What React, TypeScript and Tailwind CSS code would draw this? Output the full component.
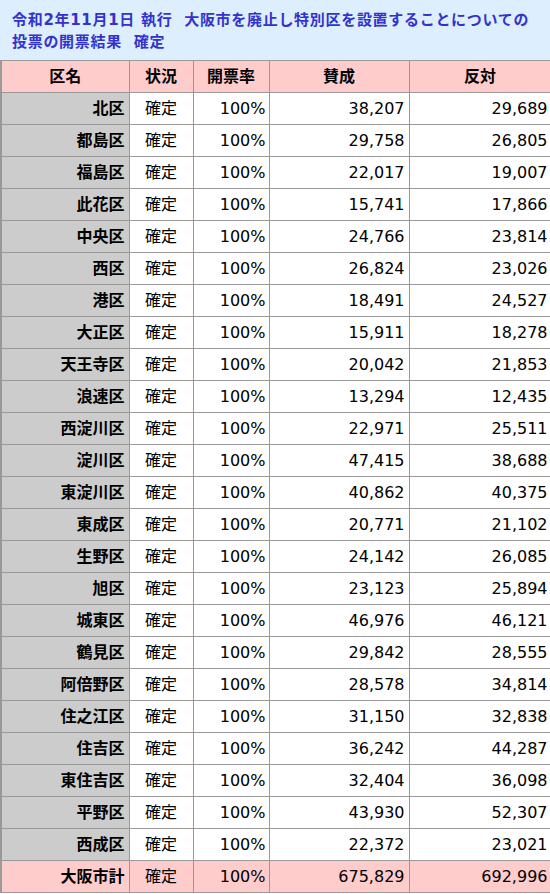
const rows: [string, string, string][] = [
  ["北区", "38,207", "29,689"],
  ["都島区", "29,758", "26,805"],
  ["福島区", "22,017", "19,007"],
  ["此花区", "15,741", "17,866"],
  ["中央区", "24,766", "23,814"],
  ["西区", "26,824", "23,026"],
  ["港区", "18,491", "24,527"],
  ["大正区", "15,911", "18,278"],
  ["天王寺区", "20,042", "21,853"],
  ["浪速区", "13,294", "12,435"],
  ["西淀川区", "22,971", "25,511"],
  ["淀川区", "47,415", "38,688"],
  ["東淀川区", "40,862", "40,375"],
  ["東成区", "20,771", "21,102"],
  ["生野区", "24,142", "26,085"],
  ["旭区", "23,123", "25,894"],
  ["城東区", "46,976", "46,121"],
  ["鶴見区", "29,842", "28,555"],
  ["阿倍野区", "28,578", "34,814"],
  ["住之江区", "31,150", "32,838"],
  ["住吉区", "36,242", "44,287"],
  ["東住吉区", "32,404", "36,098"],
  ["平野区", "43,930", "52,307"],
  ["西成区", "22,372", "23,021"],
];

const font = { fontFamily: '"DejaVu Sans", "Noto Sans CJK JP", sans-serif' };

export default function App() {
  return (
    <div className="w-[550px] bg-white text-black" style={font}>
      <div className="h-[60px] bg-[#ddeeff] px-[12px] pt-[9px] text-[15px] font-bold leading-[22px] tracking-[0.7px] text-[#3333cc]">
        令和2年11月1日&nbsp;執行&nbsp;&nbsp;大阪市を廃止し特別区を設置することについての
        <br />
        投票の開票結果&nbsp;&nbsp;確定
      </div>
      <table className="w-[550px] table-fixed border-collapse border-l-2 border-[#999999] text-[16px]">
        <colgroup>
          <col className="w-[128px]" />
          <col className="w-[64px]" />
          <col className="w-[76px]" />
          <col className="w-[140px]" />
          <col className="w-[142px]" />
        </colgroup>
        <thead>
          <tr className="h-[32px] bg-[#ffcccc]">
            {["区名", "状況", "開票率", "賛成", "反対"].map((h) => (
              <th key={h} className="border border-[#999999] p-0 text-center font-bold">
                {h}
              </th>
            ))}
          </tr>
        </thead>
        <tbody>
          {rows.map(([name, yes, no]) => (
            <tr key={name} className="h-[32px]">
              <td className="border border-[#999999] bg-[#cccccc] pr-[4px] text-right font-bold">{name}</td>
              <td className="border border-[#999999] text-center">確定</td>
              <td className="border border-[#999999] pr-[3px] text-right">100%</td>
              <td className="border border-[#999999] pr-[4px] text-right">{yes}</td>
              <td className="border border-[#999999] pr-[3px] text-right">{no}</td>
            </tr>
          ))}
          <tr className="h-[32px] bg-[#ffcccc]">
            <td className="border border-[#999999] pr-[4px] text-right font-bold">大阪市計</td>
            <td className="border border-[#999999] text-center">確定</td>
            <td className="border border-[#999999] pr-[3px] text-right">100%</td>
            <td className="border border-[#999999] pr-[4px] text-right">675,829</td>
            <td className="border border-[#999999] pr-[3px] text-right">692,996</td>
          </tr>
        </tbody>
      </table>
    </div>
  );
}
